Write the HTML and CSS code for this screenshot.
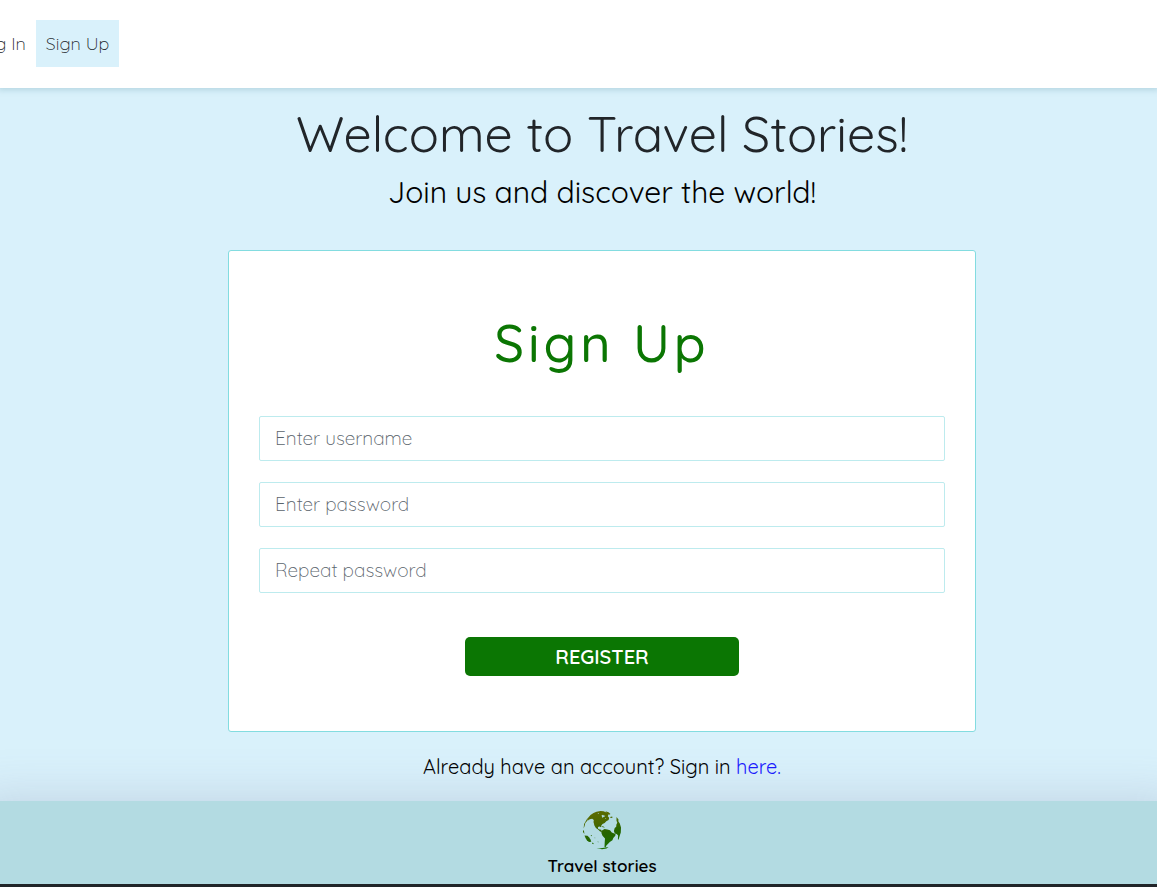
FILE: index.html
```html
<!DOCTYPE html>
<html lang="en">
<head>
<meta charset="utf-8">
<meta name="viewport" content="width=device-width, initial-scale=1">
<title>Travel Stories - Sign Up</title>
<link rel="stylesheet" href="styles.css">
</head>
<body>
<header class="site-header">
  <nav class="nav">
    <a class="nav-link" href="#login">Log In</a>
    <a class="nav-link active" href="#signup">Sign Up</a>
  </nav>
</header>
<main class="page">
  <h1 class="title">Welcome to Travel Stories!</h1>
  <p class="subtitle">Join us and discover the world!</p>
  <form class="card">
    <h2 class="card-title">Sign Up</h2>
    <div class="fields">
      <input class="field" type="text" placeholder="Enter username" aria-label="Username">
      <input class="field" type="password" placeholder="Enter password" aria-label="Password">
      <input class="field" type="password" placeholder="Repeat password" aria-label="Repeat password">
    </div>
    <button class="register" type="submit">REGISTER</button>
  </form>
  <p class="signin">Already have an account? Sign in <a class="signin-link" href="#login">here.</a></p>
</main>
<footer class="site-footer">
  <svg class="globe" viewBox="0 0 40 40" aria-hidden="true">
    <defs>
      <linearGradient id="land" x1="12" y1="0" x2="22" y2="40" gradientUnits="userSpaceOnUse">
        <stop offset="0" stop-color="#5f6b00"/>
        <stop offset="0.35" stop-color="#4a6800"/>
        <stop offset="0.6" stop-color="#266400"/>
        <stop offset="1" stop-color="#1a7000"/>
      </linearGradient>
    </defs>
    <g fill="url(#land)">
      <path d="M6 8l2.500-3 3-2 3-1.300 4-.8 3 .4 3 1.200 2 2-.7 1.700 1.400 1.500-.6 2.300-2.300 1.200-1.600 1.900-2.200 1-1.300 1.700-.3 1.400-1.200-.7-1.800.6.200 1.700 1.500.7 1.600.2.500 1.200 2 .7-.6.700-3-.9-2-1.900-2.200-1.600-1.500-2.500-.9-3.300.3-2-1.600-1.400-2.500.6-1.500 1.200z"/>
      <path d="M23.500 1.300l3 1 2 1.600-1.300.8-2.200-.9zM28 7l2.200-.4.300 1.200-1.700.3zM5 9l1.500-1.500-1 3L3.300 13l-.7 3-1 2.500.5-4.500zM1 20l1 1 .4 3L1 22z"/>
      <path d="M20 20.500l2.500-1.600 2.800.5 2.700.8 1.800 2.200 3.700 1.600-.2 1.700-2 2.400-.9 2.200-2.600 1.700-1.900 2-1.500 1.400-.9 2.200-1-.6.200-4.500.3-4-2.500-2.700-1.200-3z"/>
      <path d="M34.500 7l2 2.500-.2 1.700 1.500 2.300 1.200 4-.2 5-1.300 4-1 3.200-.6-.5.200-3.600-1.400-1.700-1.900-.5-.9-2.500.8-3 1.500-1.200.2-2.300.9-1.700-.8-2z"/>
      <path d="M2.500 25.500l3 .2 1.500 1.500 1.500 2.200.8 2.400-2.300.2-2-1.500-1.500-2.600z"/>
      <path d="M9 25l1 .4-.3.800-1-.4zM10.500 32.500l1.200.8-.5.900-1.200-.7zM15.500 31.500l1 .2-.4.900zM12.500 27.500l.8.200-.3.800zM19 16l2.500.4 1.500 1.200-2.200-.4z"/>
      <path d="M14.500 37.900l4 .4 3.500-.6 4.500-.7-2 1.400-4.500.9z"/>
    </g>
    <path fill="#b3dbe2" d="M19.500 5.500l1.500-.8.700.8 1.600.2-.6.900-1.300.3-.6 1-.7-.9zM15.500 3.500l1.500-.5-.4.900zM23 8.500l1.200-.5-.3 1z"/>
  </svg>
  <span class="brand">Travel stories</span>
</footer>
</body>
</html>
```
FILE: styles.css
```css
* { box-sizing: border-box; }
body {
  display: flex;
  flex-direction: column;
  min-height: 100vh;
  margin: 0;
  overflow-x: hidden;
  background: #d9f1fb;
  color: #000;
  font-family: Quicksand, Lato, sans-serif;
  font-weight: 400;
  border-bottom: 3px solid #212529;
}
h1, h2, p { margin: 0; }
a { text-decoration: none; }
.site-header {
  position: relative;
  padding: 20px 0 21px;
  background: #fff;
  box-shadow: 0 0 6px 2px rgba(70, 130, 150, 0.25);
}
.nav { display: flex; margin-left: -35px; }
.nav-link {
  padding: 12px 10px;
  color: #212529;
  font-size: 18px;
  font-weight: 300;
  line-height: 23px;
}
.active { background: #d9f1fb; }
.page {
  display: flex;
  flex: 1;
  flex-direction: column;
  align-items: center;
  padding: 16px 0 20px 47px;
}
.title {
  color: #212529;
  font-size: 50px;
  font-weight: 400;
  line-height: 60px;
}
.subtitle { margin-top: 9px; font-size: 30px; line-height: 38px; }
.card {
  display: flex;
  flex-direction: column;
  align-items: center;
  width: 100%;
  max-width: 748px;
  margin-top: 39px;
  padding: 59px 30px 55px;
  border: 1px solid #83dce0;
  border-radius: 3px;
  background: #fff;
}
.card-title {
  color: #0b7603;
  font-size: 52px;
  font-weight: 500;
  line-height: 66px;
  letter-spacing: 4px;
}
.fields {
  display: flex;
  flex-direction: column;
  gap: 21px;
  width: 100%;
  margin-top: 40px;
}
.field {
  width: 100%;
  height: 45px;
  padding: 0 15px 1px;
  border: 1px solid #bdebee;
  border-radius: 2px;
  background: #fff;
  font: inherit;
  font-size: 19px;
}
.field::placeholder { color: #59636b; font-weight: 300; opacity: 1; }
.register {
  width: 40%;
  height: 39px;
  margin-top: 44px;
  padding: 0 0 1px;
  border: 0;
  border-radius: 5px;
  background: #0b7603;
  color: #fff;
  font: inherit;
  font-size: 20px;
  font-weight: 600;
}
.signin { margin-top: 21px; margin-bottom: 1px; font-size: 20px; line-height: 27px; }
.signin-link { color: #1a1aff; }
.site-footer {
  display: flex;
  flex-direction: column;
  align-items: center;
  padding: 9px 0 6px 47px;
  background: #b3dbe2;
  box-shadow: 0 25px 50px 25px rgba(110, 110, 150, 0.25);
}
.globe { width: 40px; height: 40px; }
.brand { margin-top: 4px; font-size: 17px; font-weight: 600; line-height: 24px; }
```
